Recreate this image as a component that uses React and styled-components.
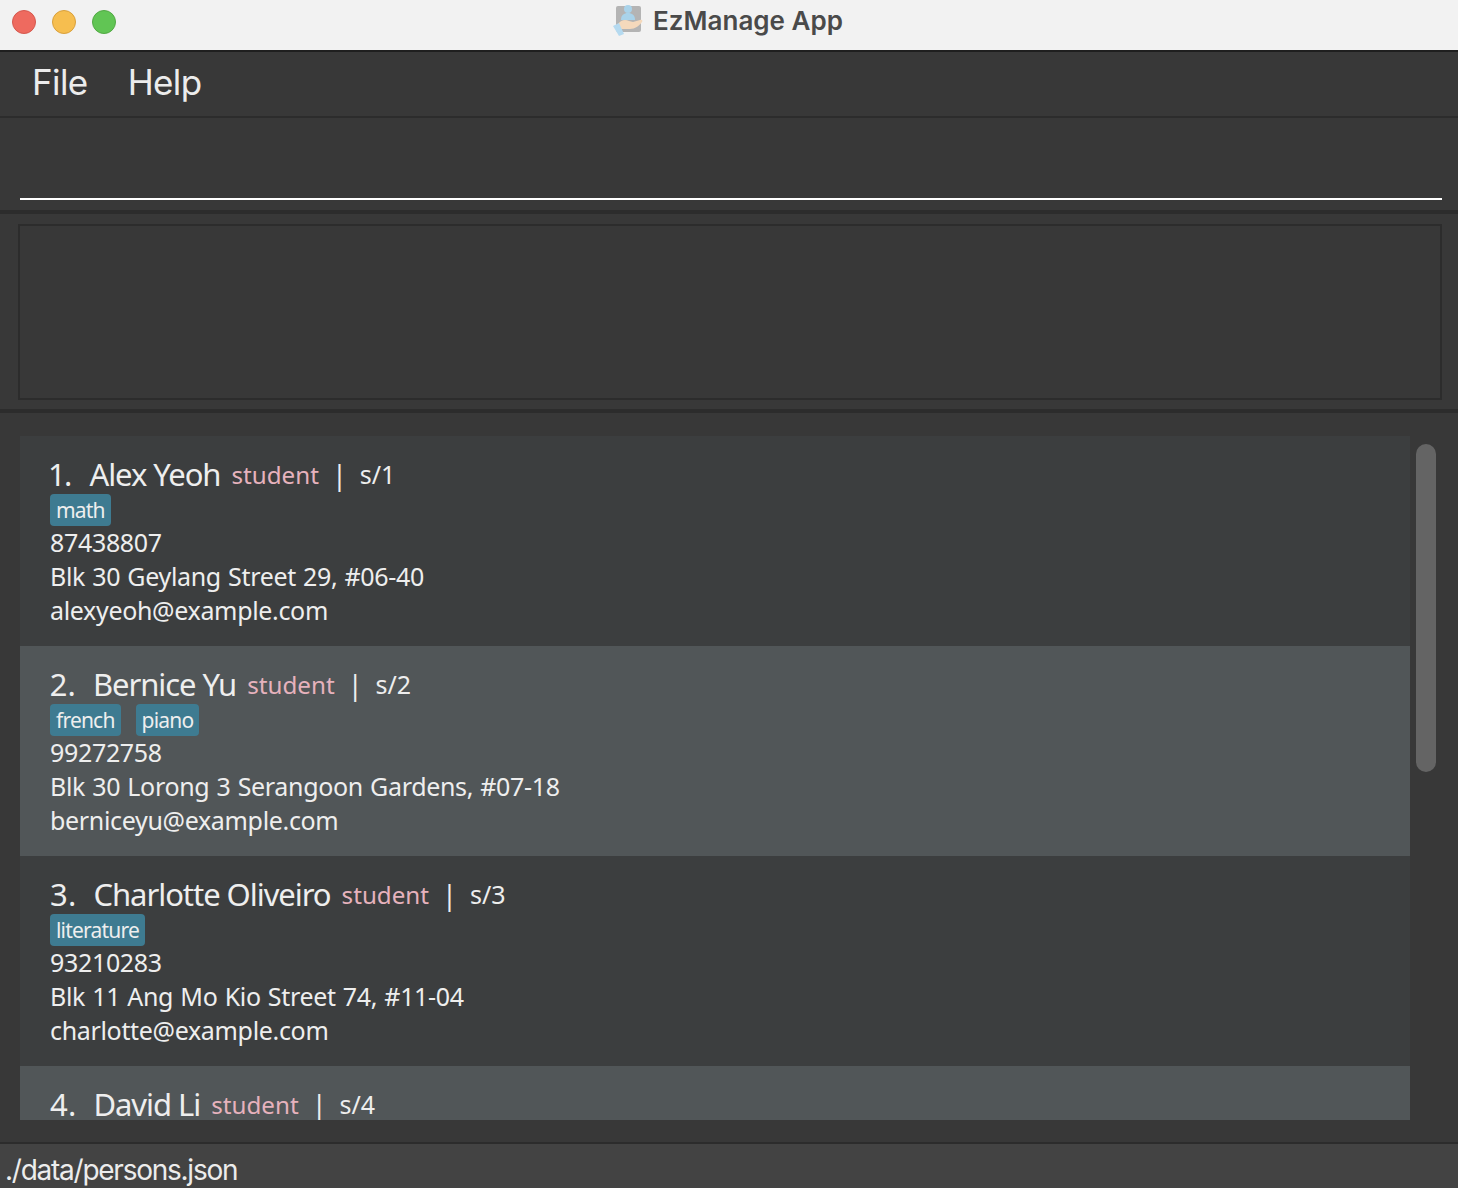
import React from "react";
import styled, { createGlobalStyle } from "styled-components";

const persons = [
    { id: 1, name: "Alex Yeoh", tags: ["math"], phone: "87438807", address: "Blk 30 Geylang Street 29, #06-40", email: "alexyeoh@example.com" },
    { id: 2, name: "Bernice Yu", tags: ["french", "piano"], phone: "99272758", address: "Blk 30 Lorong 3 Serangoon Gardens, #07-18", email: "berniceyu@example.com" },
    { id: 3, name: "Charlotte Oliveiro", tags: ["literature"], phone: "93210283", address: "Blk 11 Ang Mo Kio Street 74, #11-04", email: "charlotte@example.com" },
    { id: 4, name: "David Li", tags: [], phone: "", address: "", email: "" },
];

function AppIcon() {
    return (
        <svg width="32" height="36" viewBox="0 3 32 36">
            <rect x="4" y="6" width="25" height="26" rx="2" fill="#b4b4b4" />
            <circle cx="16" cy="9" r="4" fill="#a9d3ea" />
            <path d="M9 20c0-5 3-7 7-7s7 2 7 7z" fill="#a9d3ea" />
            <path d="M6 24c3-4 7-5 11-3l4 1 7-2c2-1 3 1 2 2-3 4-7 7-12 7H9z" fill="#f5d9bc" />
            <path d="M1 26l6-3 5 11-5 2z" fill="#b5daf0" />
        </svg>
    );
}

function PersonCard({ person }) {
    return (
        <Card $even={person.id % 2 === 0}>
            <NameRow>
                <Index>{person.id}.</Index>
                <Name>{person.name}</Name>
                <Role>student</Role>
                <Pipe>|</Pipe>
                <Code>s/{person.id}</Code>
            </NameRow>
            <Tags>
                {person.tags.map((tag) => (
                    <Tag key={tag}>{tag}</Tag>
                ))}
            </Tags>
            <Detail>{person.phone}</Detail>
            <Detail>{person.address}</Detail>
            <Detail>{person.email}</Detail>
        </Card>
    );
}

export default function App() {
    return (
        <Window>
            <GlobalStyle />
            <TitleBar>
                <Lights>
                    <Light $fill="#ee6a5f" $edge="#d5584e" />
                    <Light $fill="#f6be4f" $edge="#d9a03c" />
                    <Light $fill="#61c554" $edge="#52a944" />
                </Lights>
                <Title>
                    <AppIcon />
                    EzManage App
                </Title>
            </TitleBar>
            <MenuBar>
                <MenuItem>File</MenuItem>
                <MenuItem>Help</MenuItem>
            </MenuBar>
            <CommandBox>
                <CommandInput />
            </CommandBox>
            <ResultPane>
                <ResultBox />
            </ResultPane>
            <ListPane>
                <List>
                    {persons.map((person) => (
                        <PersonCard key={person.id} person={person} />
                    ))}
                </List>
                <Track>
                    <Thumb />
                </Track>
            </ListPane>
            <StatusBar>./data/persons.json</StatusBar>
        </Window>
    );
}

const GlobalStyle = createGlobalStyle`
    html, body {
        margin: 0;
        padding: 0;
        background: #383838;
    }
    * {
        box-sizing: border-box;
    }
`;

const Window = styled.div`
    width: 1458px;
    height: 1188px;
    display: flex;
    flex-direction: column;
    overflow: hidden;
    background: #383838;
    font-family: "Noto Sans", "Open Sans", sans-serif;
`;

const TitleBar = styled.div`
    height: 52px;
    flex: none;
    display: grid;
    grid-template-columns: 1fr auto 1fr;
    align-items: center;
    padding-bottom: 6px;
    background: #f2f2f2;
    border-bottom: 2px solid #1f1f1f;
`;

const Lights = styled.div`
    display: flex;
    gap: 16px;
    padding-left: 12px;
`;

const Light = styled.span`
    width: 24px;
    height: 24px;
    border-radius: 50%;
    background: ${(props) => props.$fill};
    border: 1px solid ${(props) => props.$edge};
`;

const Title = styled.div`
    grid-column: 2;
    display: flex;
    align-items: center;
    gap: 9px;
    padding: 0 3px 3px 0;
    font-family: "Inter", sans-serif;
    font-size: 26px;
    font-weight: 600;
    color: #4a4a4a;
`;

const MenuBar = styled.div`
    height: 66px;
    flex: none;
    display: flex;
    align-items: center;
    gap: 40px;
    padding: 0 0 5px 32px;
    border-bottom: 2px solid #2c2c2c;
    background: #383838;
`;

const MenuItem = styled.span`
    font-family: "Inter", sans-serif;
    font-size: 35px;
    letter-spacing: -0.6px;
    color: #ececec;
`;

const CommandBox = styled.div`
    height: 96px;
    flex: none;
    padding: 80px 16px 0 20px;
    border-bottom: 4px solid #2c2c2c;
`;

const CommandInput = styled.div`
    height: 2px;
    background: #ffffff;
`;

const ResultPane = styled.div`
    height: 199px;
    flex: none;
    padding: 10px 16px 9px 18px;
    border-bottom: 4px solid #2c2c2c;
`;

const ResultBox = styled.div`
    height: 176px;
    border: 2px solid #2c2c2c;
`;

const ListPane = styled.div`
    flex: 1;
    min-height: 0;
    display: flex;
    align-items: flex-start;
    padding: 23px 22px 0 20px;
`;

const List = styled.div`
    width: 1390px;
    height: 684px;
    flex: none;
    overflow: hidden;
`;

const Card = styled.div`
    height: 210px;
    padding: 18px 30px 0;
    background: ${(props) => (props.$even ? "#515658" : "#3c3e3f")};
    color: #eeeeee;
`;

const NameRow = styled.div`
    height: 40px;
    display: flex;
    align-items: center;
    white-space: pre;
`;

const Index = styled.span`
    font-size: 31px;
    font-variant-numeric: proportional-nums;
    letter-spacing: 0.2px;
    margin-right: 17px;
`;

const Name = styled.span`
    font-size: 31px;
    letter-spacing: -1.05px;
    color: #eeeeee;
`;

const Role = styled.span`
    margin-left: 11px;
    font-size: 24.2px;
    color: #e6b2bd;
`;

const Pipe = styled.span`
    margin-left: 13px;
    font-size: 27px;
`;

const Code = styled.span`
    margin-left: 13px;
    font-size: 25px;
`;

const Tags = styled.div`
    height: 32px;
    display: flex;
    gap: 15px;
`;

const Tag = styled.span`
    height: 32px;
    padding: 0 6px;
    border-radius: 4px;
    background: #3e7b91;
    color: #eeeeee;
    font-size: 21px;
    letter-spacing: -0.8px;
    line-height: 33px;
`;

const Detail = styled.div`
    height: 34px;
    font-size: 25px;
    line-height: 32px;
    letter-spacing: -0.33px;
    word-spacing: 1px;
    white-space: nowrap;
`;

const Track = styled.div`
    width: 20px;
    flex: none;
    margin-left: 6px;
    padding-top: 8px;
`;

const Thumb = styled.div`
    height: 328px;
    border-radius: 10px;
    background: #646464;
`;

const StatusBar = styled.div`
    height: 46px;
    flex: none;
    padding-left: 5px;
    border-top: 2px solid #2c2c2c;
    background: #434343;
    color: #ececec;
    font-family: "Inter", sans-serif;
    font-size: 28px;
    letter-spacing: -1.25px;
    line-height: 52px;
`;
